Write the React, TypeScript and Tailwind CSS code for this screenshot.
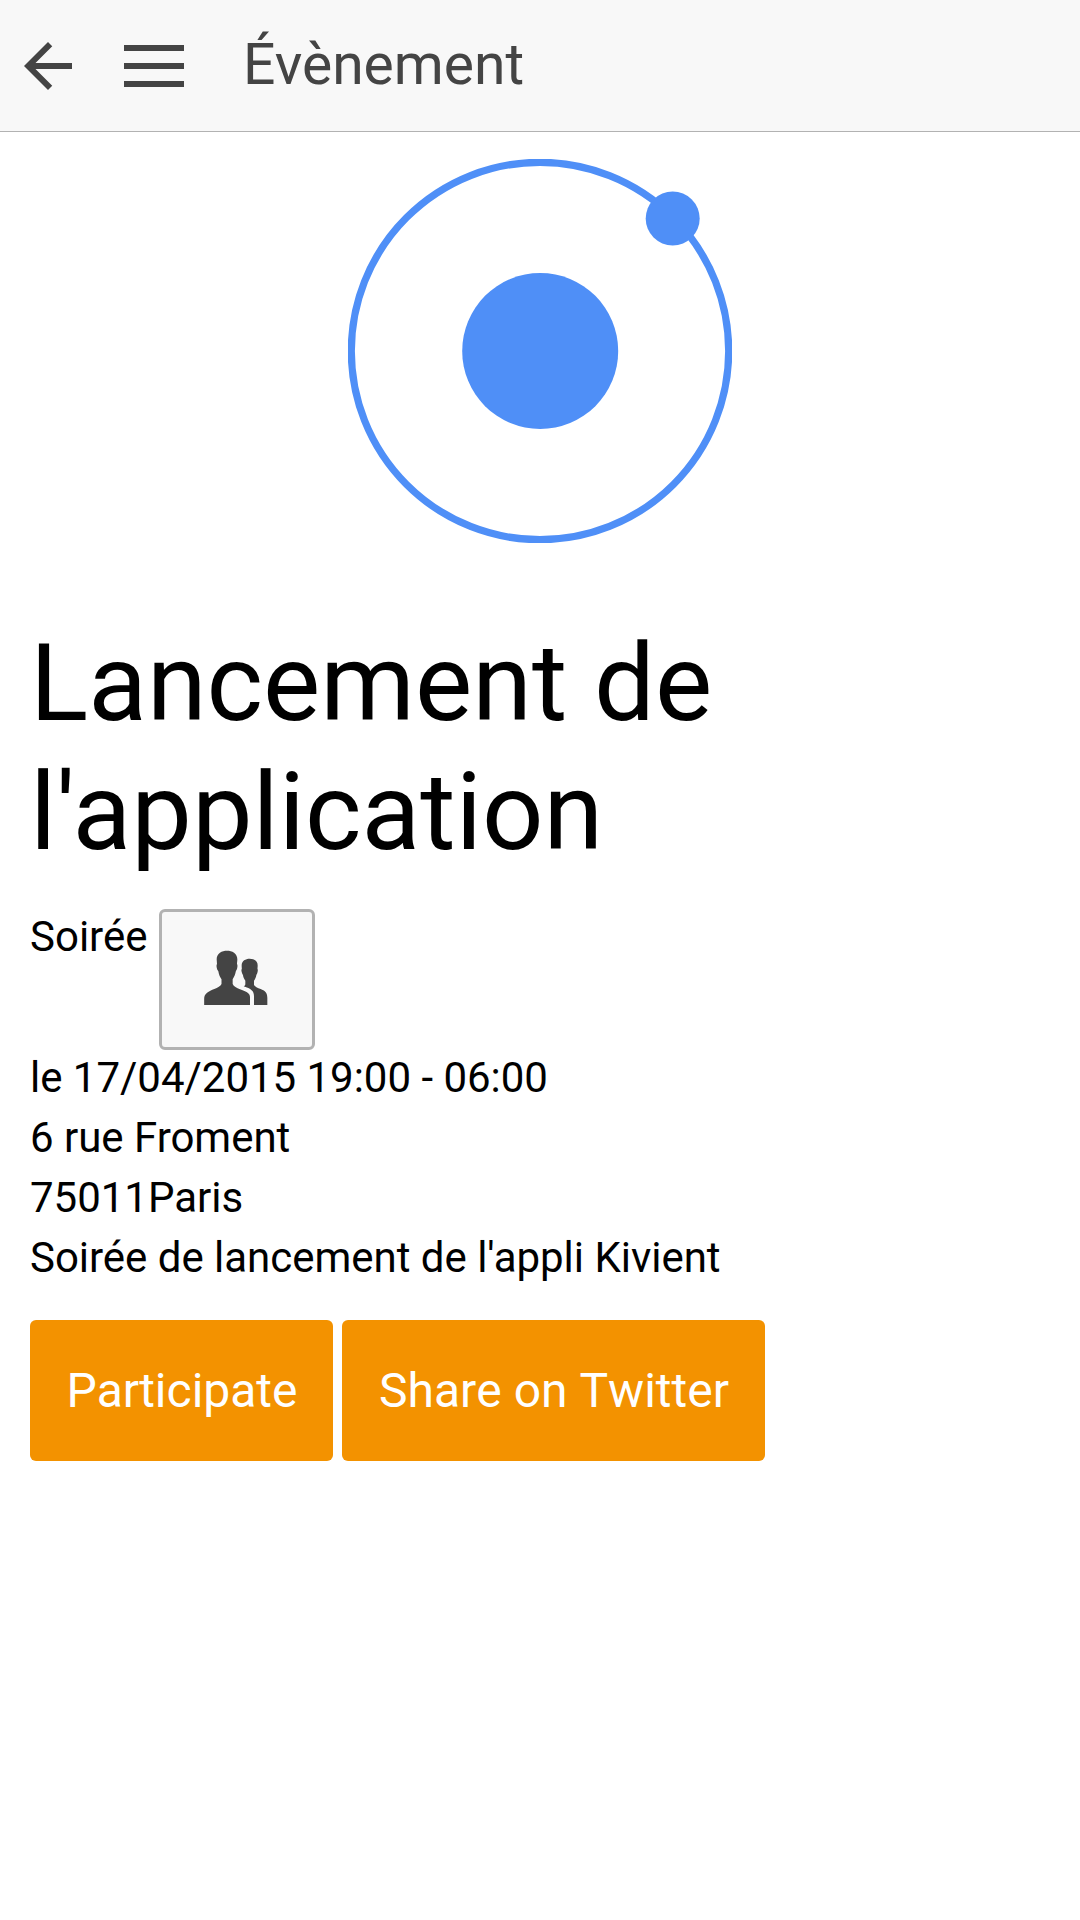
import React from "react";

function BackArrow() {
  return (
    <svg className="size-[72px]" viewBox="0 0 24 24" fill="currentColor">
      <path d="M20 11H7.83l5.59-5.59L12 4l-8 8 8 8 1.41-1.41L7.83 13H20v-2z" />
    </svg>
  );
}

function MenuBars() {
  return (
    <svg className="h-[42px] w-[60px]" viewBox="0 0 60 42" fill="currentColor">
      <path d="M0 0h60v6H0zM0 18h60v6H0zM0 36h60v6H0z" />
    </svg>
  );
}

function AtomLogo() {
  return (
    <svg className="size-[384px]" viewBox="0 0 384 384">
      <circle cx="192" cy="192" r="188.7" fill="none" stroke="#4f8ff7" strokeWidth="7.2" />
      <circle cx="192.200" cy="192" r="78" fill="#4f8ff7" />
      <circle cx="324.7" cy="59.5" r="27" fill="#4f8ff7" />
    </svg>
  );
}

function People() {
  return (
    <svg className="mr-1 mb-[9px] h-[80px] w-[90px]" viewBox="0 0 270 240" fill="#444">
      <path d="M111 47.5C126 47.5 142 55 142 73C142 79 141 83 141 87C143.500 89 142.500 99 140 104C139 106 138 107 137.500 109C136 119 132 127 128 133V147C131 155 140 158 150 163C166 169 180 174 180 186V210H42.500V192C42.500 175 56 169 73 162C83 158 92 154 94.500 147V133C90 127 86.500 119 85 109C84 107 82.500 106 81.500 103C79.500 96 78.500 90 81 87C81 82 80 78 80 73C80 55 96 47.500 111 47.500Z" />
      <path d="M179 71C191 71 203 77 203 91C203 96 202.500 99 202.500 102C204.500 104 203 112 201 116C200 118 199.500 118 199 121C198 127 195 133 192 137V149C194 155 203 158 212 162C224 167 232 172 232 188V210H192V184C192 168 183 161 161 154C164 153 165.500 151 166 148V137C162 132 160 127 159 121C158.500 118 157 117 156 114C154 109 153.500 104 155.500 102C155.500 99 155 96 155 91C155 77 167 71 179 71Z" />
    </svg>
  );
}

export default function App() {
  return (
    <div className="min-h-[1920px] w-[1080px] bg-white font-['Roboto',sans-serif] text-[42px] leading-[60px] text-black">
      <header className="flex h-[132px] items-center border-b border-[#b2b2b2] bg-[#f8f8f8] pl-3 text-[#444]">
        <BackArrow />
        <div className="ml-10">
          <MenuBars />
        </div>
        <h1 className="ml-[59px] -mt-[2px] text-[57px] leading-[129px]">Évènement</h1>
      </header>

      <main className="px-[30px] pt-[27px]">
        <div className="flex justify-center">
          <AtomLogo />
        </div>
        <h2 className="mt-[76px] text-[108px] leading-[129px]">
          Lancement de
          <br />
          l'application
        </h2>

        <div className="mt-[30px] flex items-start">
          <span className="w-[129px]">Soirée</span>
          <button className="mt-[2px] flex h-[141px] w-[156px] items-center justify-center rounded-md border-3 border-[#b2b2b2] bg-[#f8f8f8]">
            <People />
          </button>
        </div>
        <div className="-mt-[2px] tracking-[-0.02px]">
          <p>le 17/04/2015 19:00 - 06:00</p>
          <p>6 rue Froment</p>
          <p>75011Paris</p>
          <p>Soirée de lancement de l'appli Kivient</p>
        </div>

        <div className="mt-8 flex gap-[9px] text-5xl text-white [font-kerning:none]">
          <button className="h-[141px] w-[303px] rounded-md bg-[#f39200] pl-px">Participate</button>
          <button className="h-[141px] w-[423px] rounded-md bg-[#f39200] pl-px">Share on Twitter</button>
        </div>
      </main>
    </div>
  );
}
